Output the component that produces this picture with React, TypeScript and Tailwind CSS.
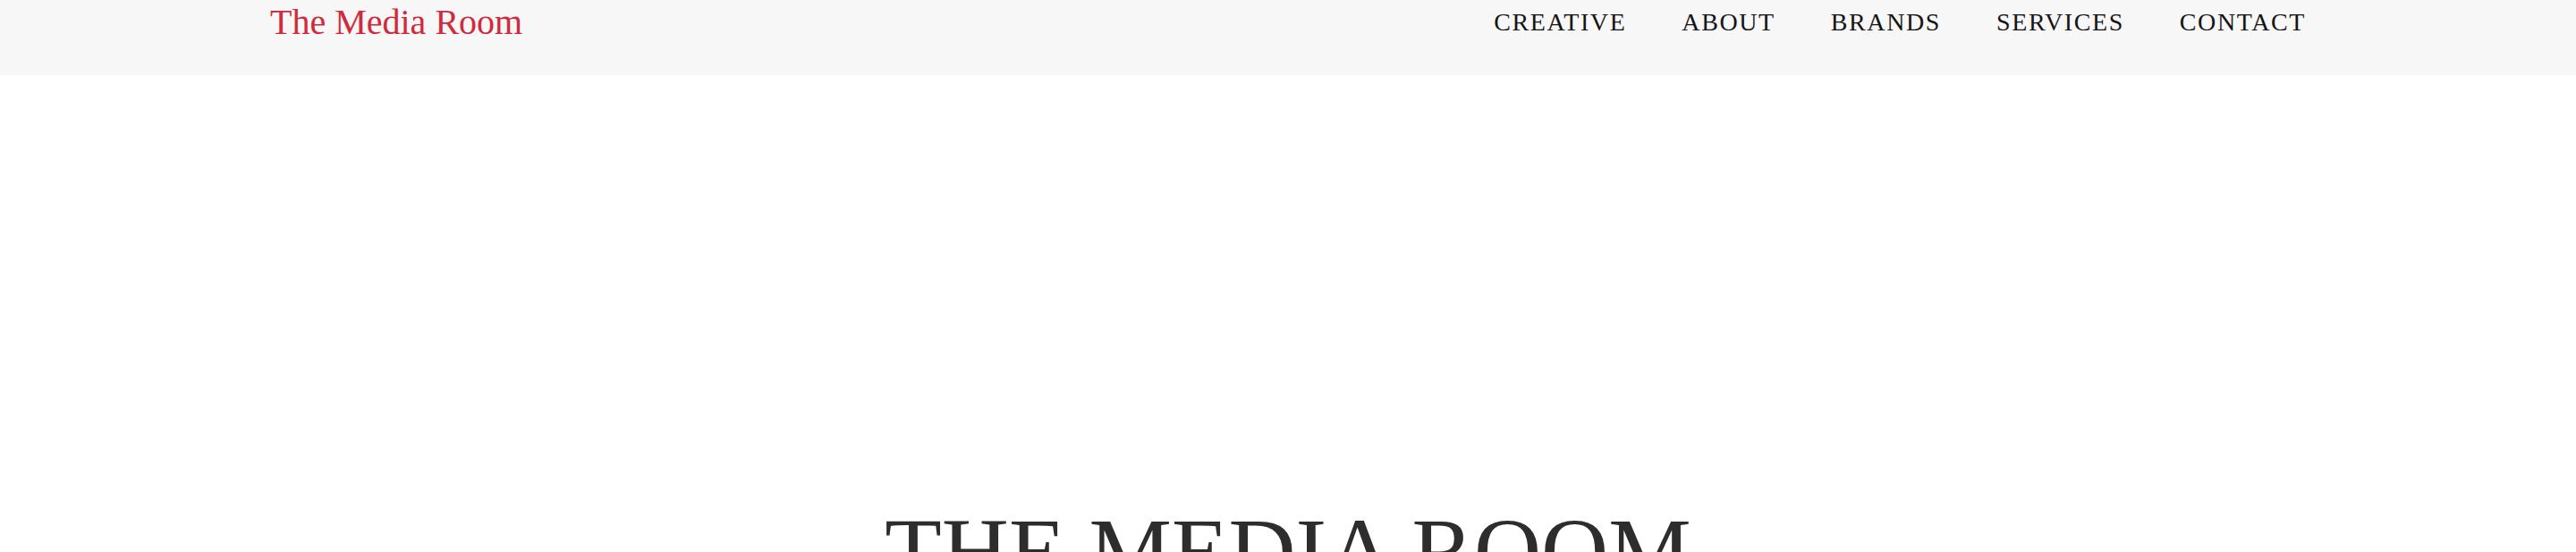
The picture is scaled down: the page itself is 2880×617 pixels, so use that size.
import React from 'react';

const navItems = ['CREATIVE', 'ABOUT', 'BRANDS', 'SERVICES', 'CONTACT'];

const serif = { fontFamily: '"Liberation Serif", "DejaVu Serif", serif' };

const Header: React.FC = () => (
  <header className="w-full h-[84px] bg-[#f7f7f7]">
    <div className="w-[2276px] mx-auto flex items-start justify-between">
      <a href="#" className="pt-[5px] text-[40px] leading-none text-[#d02a3d]">
        The Media Room
      </a>
      <nav>
        <ul className="flex gap-[62px] pt-[11px] text-[28px] leading-none tracking-[1.6px] text-[#151515]">
          {navItems.map((item) => (
            <li key={item}>
              <a href="#">{item}</a>
            </li>
          ))}
        </ul>
      </nav>
    </div>
  </header>
);

export default function App() {
  return (
    <div className="w-full min-h-screen bg-white overflow-hidden" style={serif}>
      <Header />
      <main className="pt-[480px]">
        <h1 className="text-center text-[104px] leading-none text-[#2d2d2d]">THE MEDIA ROOM</h1>
      </main>
    </div>
  );
}
